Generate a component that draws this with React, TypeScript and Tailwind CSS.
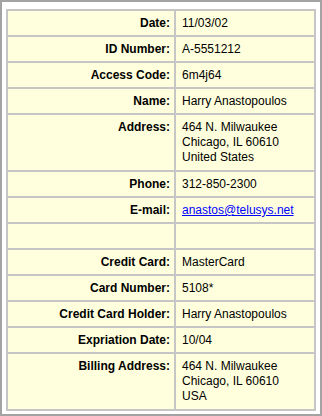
type Field = {
  label: string;
  lines?: string[];
  email?: string;
};

const fields: Field[] = [
  { label: "Date:", lines: ["11/03/02"] },
  { label: "ID Number:", lines: ["A-5551212"] },
  { label: "Access Code:", lines: ["6m4j64"] },
  { label: "Name:", lines: ["Harry Anastopoulos"] },
  { label: "Address:", lines: ["464 N. Milwaukee", "Chicago, IL 60610", "United States"] },
  { label: "Phone:", lines: ["312-850-2300"] },
  { label: "E-mail:", email: "anastos@telusys.net" },
  { label: "" },
  { label: "Credit Card:", lines: ["MasterCard"] },
  { label: "Card Number:", lines: ["5108*"] },
  { label: "Credit Card Holder:", lines: ["Harry Anastopoulos"] },
  { label: "Expriation Date:", lines: ["10/04"] },
  { label: "Billing Address:", lines: ["464 N. Milwaukee", "Chicago, IL 60610", "USA"] },
];

export default function App() {
  return (
    <div className="w-[322px] h-[416px] border-2 border-[#a3a3a3] bg-white pt-[7px] pl-[4px] pr-[4px] pb-[4px] font-['Liberation_Sans',Arial,sans-serif] text-[12px] text-black">
      <table className="w-[310px] table-fixed border-separate border-spacing-0 border border-[#c6c6c6] bg-[#ffffdd]">
        <colgroup>
          <col className="w-[168px]" />
          <col />
        </colgroup>
        <tbody>
          {fields.map((f, i) => {
            const multi = (f.lines?.length ?? 0) > 1;
            return (
              <tr key={i}>
                <td
                  className={`border border-[#c6c6c6] pr-[4px] pt-[5px] text-right align-top font-bold leading-[15px] h-[26px] ${
                    multi ? "pb-[5px]" : "pb-[4px]"
                  }`}
                >
                  {f.label}
                </td>
                <td
                  className={`border border-[#c6c6c6] pl-[6px] pt-[5px] align-top leading-[15px] ${
                    multi ? "pb-[5px]" : "pb-[4px]"
                  }`}
                >
                  {f.email ? (
                    <a href={`mailto:${f.email}`} className="text-[#0000ff] underline">
                      {f.email}
                    </a>
                  ) : (
                    f.lines?.map((l) => <div key={l}>{l}</div>)
                  )}
                </td>
              </tr>
            );
          })}
        </tbody>
      </table>
    </div>
  );
}
